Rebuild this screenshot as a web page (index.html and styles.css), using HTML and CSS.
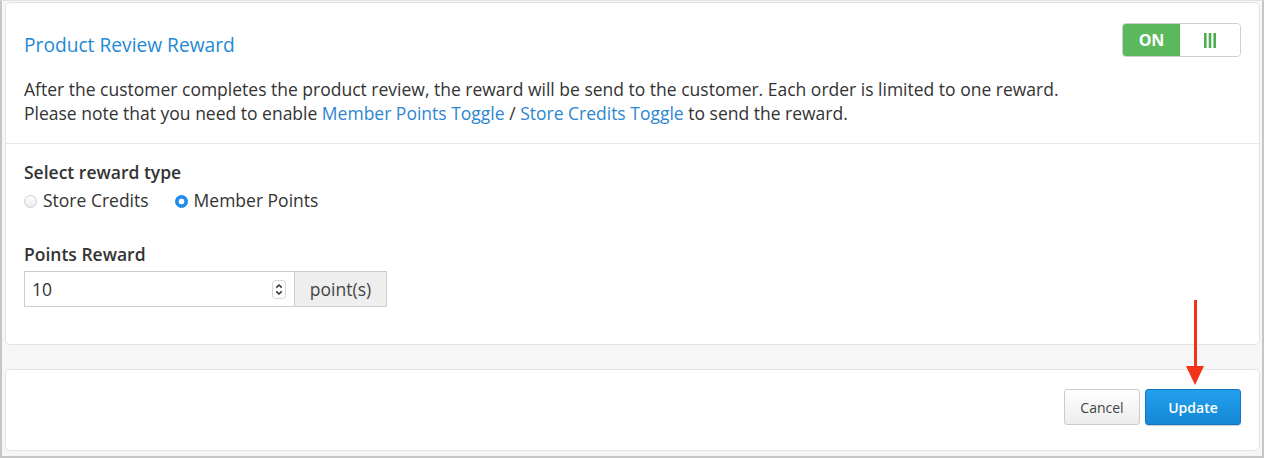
FILE: index.html
```html
<!DOCTYPE html>
<html lang="en">

<head>
    <meta charset="UTF-8">
    <meta name="viewport" content="width=device-width, initial-scale=1.0">
    <title>Product Review Reward</title>
    <link rel="stylesheet" href="styles.css">
</head>

<body>
    <div class="frame">
        <div class="card">
            <div class="card-head">
                <div class="toggle">
                    <span class="toggle-on">ON</span>
                    <span class="toggle-off">
                        <svg width="12" height="15" viewBox="0 0 12 15">
                            <rect x="0" y="0" width="2.6" height="15" fill="#4cae4c"/>
                            <rect x="4.7" y="0" width="2.6" height="15" fill="#4cae4c"/>
                            <rect x="9.4" y="0" width="2.6" height="15" fill="#4cae4c"/>
                        </svg>
                    </span>
                </div>
                <h2 class="title">Product Review Reward</h2>
                <p class="desc">
                    After the customer completes the product review, the reward will be send to the customer. Each order is limited to one reward.<br>
                    Please note that you need to enable <a href="#">Member Points Toggle</a> / <a href="#">Store Credits Toggle</a> to send the reward.
                </p>
            </div>

            <div class="card-body">
                <div class="field-label">Select reward type</div>
                <div class="radios">
                    <label class="radio"><span class="dot"></span>Store Credits</label>
                    <label class="radio checked"><span class="dot"></span>Member Points</label>
                </div>

                <div class="field-label points-label">Points Reward</div>
                <div class="input-group">
                    <div class="num-input">
                        <span class="num-value">10</span>
                        <svg class="spin" width="14" height="19" viewBox="0 0 14 19">
                            <rect x="0.5" y="0.5" width="13" height="18" rx="3" fill="#fff" stroke="#d6d6d6"/>
                            <path d="M4.3 7.6 L7 5 L9.7 7.6" fill="none" stroke="#333" stroke-width="1.5"/>
                            <path d="M4.3 11.4 L7 14 L9.7 11.4" fill="none" stroke="#333" stroke-width="1.5"/>
                        </svg>
                    </div>
                    <span class="addon">point(s)</span>
                </div>
            </div>
        </div>

        <div class="card card-actions">
            <button class="btn btn-cancel">Cancel</button>
            <button class="btn btn-update">Update</button>
            <div class="arrow">
                <span class="arrow-line"></span>
                <span class="arrow-head"></span>
            </div>
        </div>
    </div>
</body>

</html>
```

FILE: styles.css
```css
* {
    margin: 0;
    padding: 0;
    box-sizing: border-box;
    font-family: "Open Sans", "Noto Sans", sans-serif;
}

html, body {
    height: 100%;
}

body {
    background-color: #f6f6f6;
    color: #333;
}

.frame {
    height: 458px;
    border: 2px solid #c6c6c6;
    border-top: 1px solid #e2e2e2;
    padding: 1px 2px 0 3px;
}

.card {
    background-color: #fff;
    border: 1px solid #e3e3e3;
    border-radius: 5px;
}

.card-head {
    padding: 20px 18px 18px 18px;
    border-bottom: 1px solid #e6e6e6;
}

.toggle {
    float: right;
    display: flex;
    width: 119px;
    height: 34px;
    border: 1px solid #cfcfcf;
    border-radius: 4px;
    overflow: hidden;
}

.toggle-on {
    width: 57px;
    background-color: #5cb85c;
    color: #fff;
    font-weight: 700;
    font-size: 16px;
    display: flex;
    align-items: center;
    justify-content: center;
}

.toggle-off {
    flex: 1;
    display: flex;
    align-items: center;
    justify-content: center;
    background-color: #fff;
}

.title {
    font-size: 19.2px;
    font-weight: 400;
    color: #1f8ad6;
    line-height: 24px;
    padding-top: 10px;
}

.desc {
    margin-top: 20px;
    font-size: 17.5px;
    line-height: 24px;
    color: #333;
}

.desc a {
    color: #2d86cf;
    text-decoration: none;
}

.card-body {
    padding: 16px 18px 37px;
}

.field-label {
    font-size: 17.5px;
    font-weight: 600;
    line-height: 24px;
}

.points-label {
    margin-top: 30px;
}

.radios {
    display: flex;
    gap: 26px;
    margin-top: 4px;
    line-height: 24px;
    font-size: 17.5px;
}

.radio {
    display: flex;
    align-items: center;
    color: #333;
}

.radio .dot {
    width: 13px;
    height: 13px;
    border-radius: 50%;
    border: 1px solid #cfcfcf;
    background: linear-gradient(#fff, #ececec);
    margin-right: 6px;
    margin-top: 2px;
}

.radio.checked .dot {
    border-color: #1b84d8;
    background: radial-gradient(circle, #fff 0 2.6px, #1e8ff0 3.2px);
}

.input-group {
    display: flex;
    margin-top: 5px;
    width: 363px;
    height: 36px;
}

.num-input {
    width: 271px;
    border: 1px solid #cccccc;
    display: flex;
    align-items: center;
    justify-content: space-between;
    padding: 0 8px 0 7px;
    font-size: 17.5px;
}

.addon {
    flex: 1;
    background-color: #eeeeee;
    border: 1px solid #cccccc;
    border-left: none;
    display: flex;
    align-items: center;
    justify-content: center;
    font-size: 17.5px;
    color: #444;
}

.card-actions {
    position: relative;
    margin-top: 24px;
    height: 82px;
    display: flex;
    justify-content: flex-end;
    align-items: flex-start;
    gap: 5px;
    padding: 19px 18px 0 0;
}

.btn {
    height: 36px;
    border-radius: 3px;
    font-size: 14px;
    cursor: pointer;
}

.btn-cancel {
    width: 76px;
    border: 1px solid #cbcbcb;
    background: linear-gradient(#ffffff, #ececec);
    color: #444;
}

.btn-update {
    width: 96px;
    border: 1px solid #1574bf;
    background: linear-gradient(#22a0ec, #1587d6);
    color: #fff;
    font-weight: 600;
    box-shadow: 0 1px 1px rgba(0, 0, 0, 0.2);
}

.arrow {
    position: absolute;
    left: 1179px;
    top: -70px;
    width: 20px;
    display: flex;
    flex-direction: column;
    align-items: center;
}

.arrow-line {
    width: 3px;
    height: 66px;
    background-color: #f3321a;
}

.arrow-head {
    width: 0;
    height: 0;
    border-left: 9px solid transparent;
    border-right: 9px solid transparent;
    border-top: 19px solid #f3321a;
}
```
